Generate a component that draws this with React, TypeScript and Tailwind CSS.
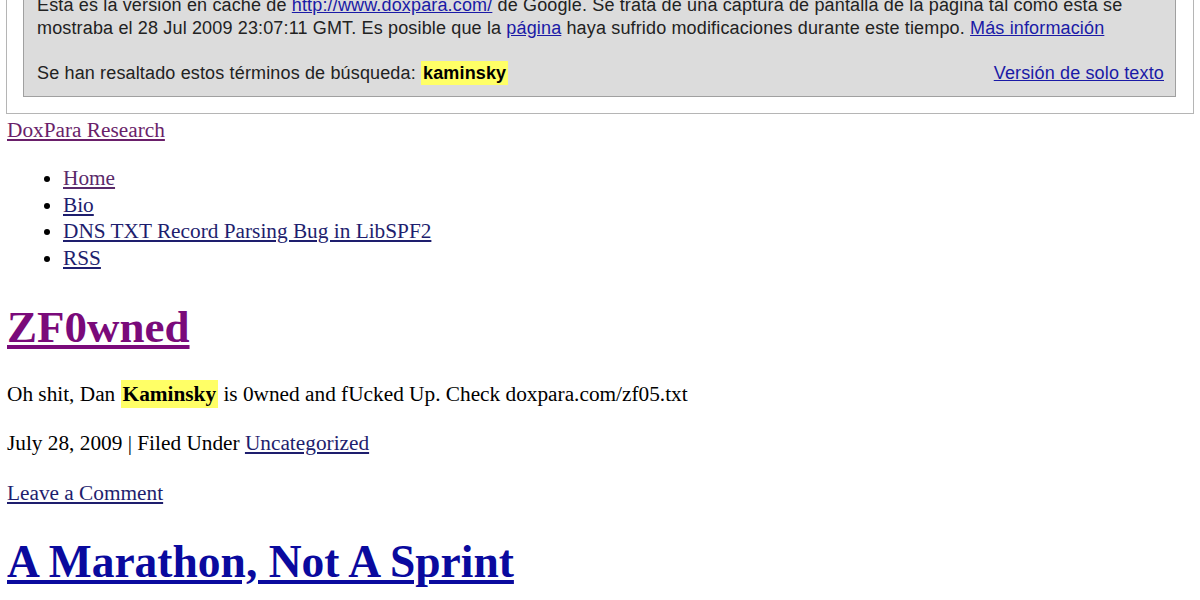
import React from 'react'

const serif = { fontFamily: '"Liberation Serif", "Times New Roman", serif' }
const sans = { fontFamily: '"Liberation Sans", Arial, sans-serif' }

function CacheNotice() {
  return (
    <div className="ml-[6px] w-[1188px] border border-[#b5b5b5] bg-white pl-[16px] pr-[17px] pb-[16px] -mt-[16px]" style={sans}>
      <div className="border border-[#a0a0a0] bg-[#dcdcdc] pl-[13px] pr-[11px] pt-[8px] pb-[11px] text-[18px] leading-[23px] tracking-[0.15px] text-[#222]">
        <p>
          Esta es la versión en caché de{' '}
          <a href="#" className="text-[#1a1aa6] underline">http://www.doxpara.com/</a> de Google. Se trata de una captura de
          pantalla de la página tal como esta se mostraba el 28 Jul 2009 23:07:11 GMT. Es posible que la{' '}
          <a href="#" className="text-[#1a1aa6] underline">página</a> haya sufrido modificaciones durante este tiempo.{' '}
          <a href="#" className="text-[#1a1aa6] underline">Más información</a>
        </p>
        <div className="mt-[22px] flex items-center justify-between">
          <span>
            Se han resaltado estos términos de búsqueda:{' '}
            <b className="bg-[#ffff66] px-[2px] py-[2px] text-black">kaminsky</b>
          </span>
          <a href="#" className="text-[#1a1aa6] underline">Versión de solo texto</a>
        </div>
      </div>
    </div>
  )
}

export default function App() {
  return (
    <div className="h-[600px] overflow-hidden bg-white text-black" style={serif}>
      <CacheNotice />
      <div className="px-[7px] text-[21.3px]">
        <a href="#" className="mt-[4px] block w-fit text-[#6a1f6a] underline leading-[24px]">DoxPara Research</a>
        <ul className="mt-[23px] list-disc pl-[56px] leading-[26.5px]">
          <li><a href="#" className="text-[#5a2a6a] underline">Home</a></li>
          <li><a href="#" className="text-[#1e1e6e] underline">Bio</a></li>
          <li><a href="#" className="text-[#1e1e6e] underline">DNS TXT Record Parsing Bug in LibSPF2</a></li>
          <li><a href="#" className="text-[#1e1e6e] underline">RSS</a></li>
        </ul>
        <h1 className="mt-[30px] text-[45px] font-bold leading-[52px]">
          <a href="#" className="text-[#7a0a7a] underline">ZF0wned</a>
        </h1>
        <p className="mt-[29px] leading-[24px]">
          Oh shit, Dan <b className="bg-[#ffff66] px-[2px] py-[2px]">Kaminsky</b> is 0wned and fUcked Up. Check doxpara.com/zf05.txt
        </p>
        <p className="mt-[25px] leading-[24px]">
          July 28, 2009 | Filed Under <a href="#" className="text-[#1e1e6e] underline">Uncategorized</a>
        </p>
        <p className="mt-[26px] leading-[24px]">
          <a href="#" className="text-[#1e1e6e] underline">Leave a Comment</a>
        </p>
        <h1 className="mt-[31px] text-[45.5px] font-bold leading-[52px]">
          <a href="#" className="text-[#0a0a9e] underline">A Marathon, Not A Sprint</a>
        </h1>
      </div>
    </div>
  )
}
